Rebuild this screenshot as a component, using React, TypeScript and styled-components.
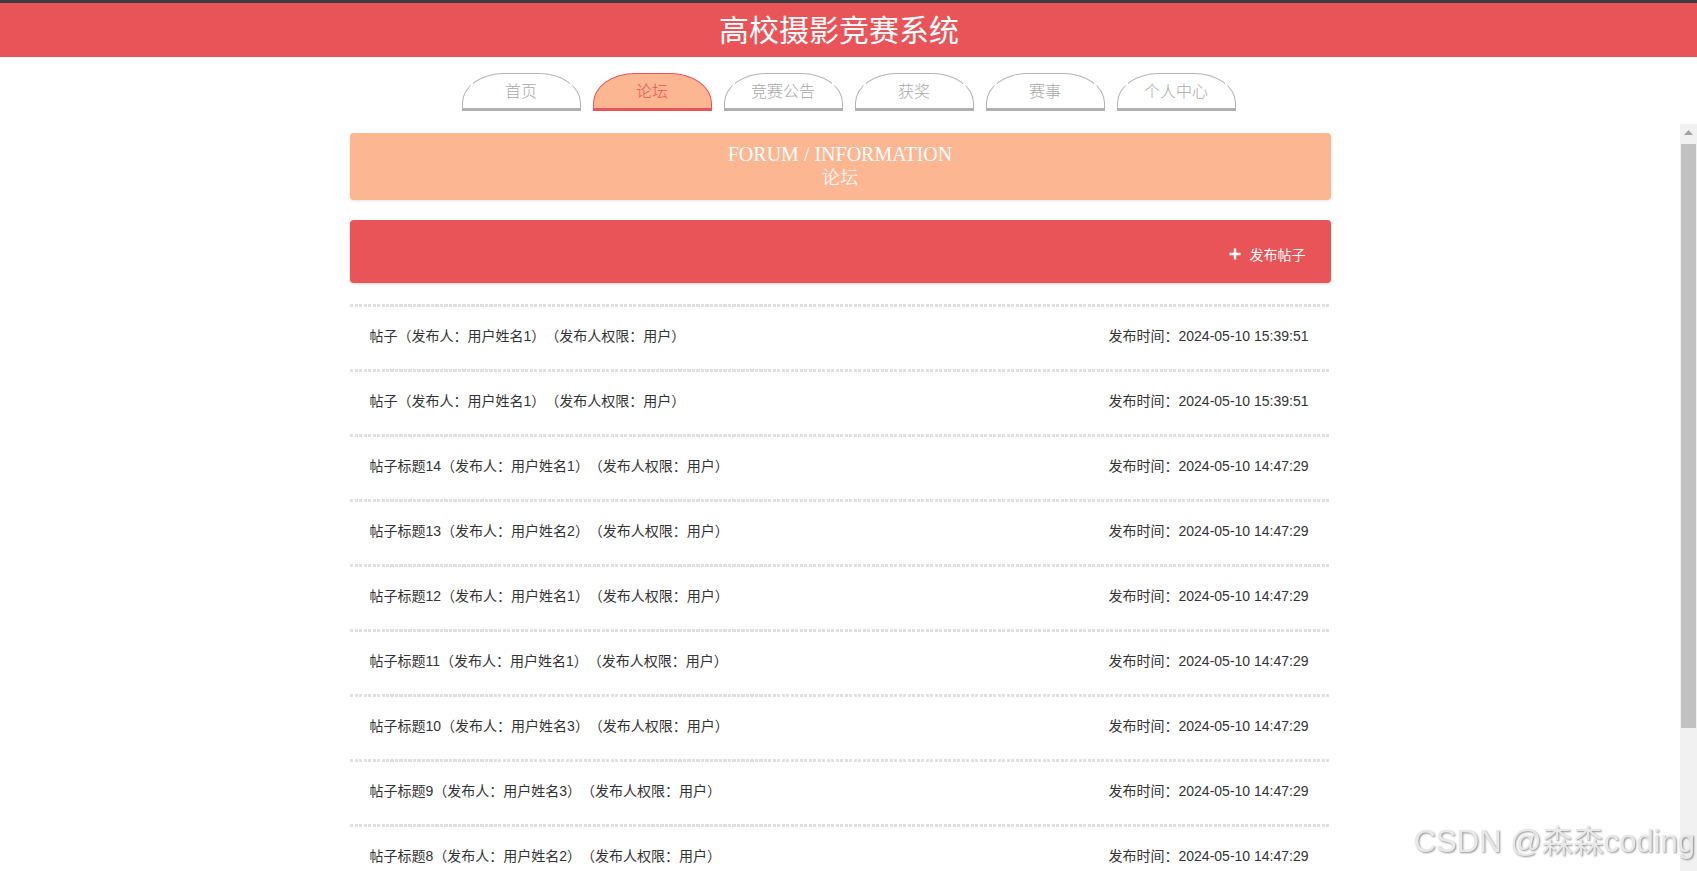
import React from "react";
import styled, {createGlobalStyle} from "styled-components";

const GlobalStyle = createGlobalStyle`
  html, body {
    margin: 0;
    padding: 0;
    height: 100%;
    overflow: hidden;
    font-family: "Liberation Sans", "Noto Sans CJK SC", sans-serif;
    background: #fff;
    text-spacing-trim: space-all;
  }
`;

interface IPost {
  title: string;
  author: string;
  time: string;
}

const tabs = ["首页", "论坛", "竞赛公告", "获奖", "赛事", "个人中心"];

const posts: IPost[] = [
  {title: "帖子", author: "用户姓名1", time: "2024-05-10 15:39:51"},
  {title: "帖子", author: "用户姓名1", time: "2024-05-10 15:39:51"},
  {title: "帖子标题14", author: "用户姓名1", time: "2024-05-10 14:47:29"},
  {title: "帖子标题13", author: "用户姓名2", time: "2024-05-10 14:47:29"},
  {title: "帖子标题12", author: "用户姓名1", time: "2024-05-10 14:47:29"},
  {title: "帖子标题11", author: "用户姓名1", time: "2024-05-10 14:47:29"},
  {title: "帖子标题10", author: "用户姓名3", time: "2024-05-10 14:47:29"},
  {title: "帖子标题9", author: "用户姓名3", time: "2024-05-10 14:47:29"},
  {title: "帖子标题8", author: "用户姓名2", time: "2024-05-10 14:47:29"},
  {title: "帖子标题7", author: "用户姓名1", time: "2024-05-10 14:47:29"},
  {title: "帖子标题6", author: "用户姓名3", time: "2024-05-10 14:47:29"},
];

function App() {
  return (
    <Page>
      <GlobalStyle />
      <TopStrip />
      <Header>
        <Title>高校摄影竞赛系统</Title>
      </Header>
      <Nav>
        {tabs.map((tab) => (
          <Tab key={tab} active={tab === "论坛"}>
            {tab}
          </Tab>
        ))}
      </Nav>
      <Body>
        <Scroller>
          <Content>
            <Banner>
              <BannerEn>FORUM / INFORMATION</BannerEn>
              <BannerCn>论坛</BannerCn>
            </Banner>
            <ActionBar>
              <PostButton>
                <PlusIcon viewBox="0 0 12 12">
                  <path d="M6 0.5v11M0.5 6h11" stroke="#fff" strokeWidth="2.4" />
                </PlusIcon>
                发布帖子
              </PostButton>
            </ActionBar>
            <List>
              {posts.map((post, i) => (
                <Row key={i}>
                  <span>
                    {post.title}（发布人：{post.author}）（发布人权限：用户）
                  </span>
                  <span>发布时间：{post.time}</span>
                </Row>
              ))}
            </List>
          </Content>
        </Scroller>
        <ScrollTrack>
          <ArrowButton>
            <svg width="9" height="5" viewBox="0 0 9 5">
              <polygon points="4.5,0 9,5 0,5" fill="#a3a3a3" />
            </svg>
          </ArrowButton>
          <Thumb />
        </ScrollTrack>
      </Body>
      <Watermark>CSDN @森森coding</Watermark>
    </Page>
  );
}

const Page = styled.div`
  height: 100vh;
  display: flex;
  flex-direction: column;
`;
const TopStrip = styled.div`
  height: 3px;
  background-color: #3c3c3c;
`;
const Header = styled.div`
  height: 54px;
  box-sizing: border-box;
  background-color: #e95458;
  display: flex;
  align-items: center;
  justify-content: center;
  padding: 0 19px 4px 0;
`;
const Title = styled.div`
  color: #fff;
  font-size: 30px;
  font-family: "Noto Sans CJK SC", sans-serif;
`;
const Nav = styled.div`
  display: flex;
  justify-content: center;
  gap: 12px;
  padding: 16px 0 13px;
`;
const Tab = styled.div<{active?: boolean}>`
  width: 117px;
  height: 31px;
  padding-bottom: 3px;
  display: flex;
  align-items: center;
  justify-content: center;
  font-size: 16px;
  font-family: "Noto Sans CJK SC", sans-serif;
  font-weight: 300;
  color: ${(p) => (p.active ? "#e95458" : "#a9a9a9")};
  background-color: ${(p) => (p.active ? "#fdb692" : "#fff")};
  border: 1px solid ${(p) => (p.active ? "#e95458" : "#b4b4b4")};
  border-bottom: 3px solid ${(p) => (p.active ? "#e95458" : "#b0b0b0")};
  border-radius: 42px 42px 0 0 / 30px 30px 0 0;
`;
const Body = styled.div`
  flex: 1;
  min-height: 0;
  display: flex;
`;
const Scroller = styled.div`
  flex: 1;
  overflow: hidden;
`;
const ScrollTrack = styled.div`
  width: 17px;
  background-color: #f1f1f1;
  display: flex;
  flex-direction: column;
  align-items: center;
`;
const ArrowButton = styled.div`
  height: 17px;
  width: 17px;
  display: flex;
  align-items: center;
  justify-content: center;
`;
const Thumb = styled.div`
  width: 15px;
  height: 584px;
  margin-top: 3px;
  background-color: #c1c1c1;
`;
const Content = styled.div`
  width: 981px;
  margin: 9px auto 0;
  padding-bottom: 30px;
`;
const Banner = styled.div`
  height: 64px;
  padding-bottom: 3px;
  background-color: #fdb692;
  border-radius: 4px;
  box-shadow: 0 1px 3px rgba(0, 0, 0, 0.12);
  display: flex;
  flex-direction: column;
  align-items: center;
  justify-content: center;
  color: #fff;
`;
const BannerEn = styled.div`
  font-family: "Liberation Serif", serif;
  font-size: 20px;
  line-height: 22px;
`;
const BannerCn = styled.div`
  font-family: "Noto Serif CJK SC", "Noto Sans CJK SC", serif;
  font-size: 18px;
  line-height: 23px;
`;
const ActionBar = styled.div`
  margin-top: 20px;
  height: 63px;
  background-color: #e95458;
  border-radius: 4px;
  box-shadow: 0 1px 3px rgba(0, 0, 0, 0.18);
  display: flex;
  align-items: center;
  justify-content: flex-end;
  padding-right: 25px;
`;
const PostButton = styled.div`
  display: flex;
  align-items: center;
  gap: 9px;
  color: #fff;
  font-size: 14px;
  margin-top: 4px;
  font-family: "Noto Sans CJK SC", sans-serif;
`;
const PlusIcon = styled.svg`
  width: 12px;
  height: 12px;
`;
const List = styled.div`
  margin-top: 21px;
  background: repeating-linear-gradient(90deg, #e0e0e0 0 3px, transparent 3px 4.5px) bottom left / 100% 3px no-repeat;
  padding-bottom: 3px;
`;
const Row = styled.div`
  height: 62px;
  padding: 3px 22px 0 20px;
  display: flex;
  align-items: center;
  justify-content: space-between;
  font-size: 14px;
  color: #333;
  background: repeating-linear-gradient(90deg, #e0e0e0 0 3px, transparent 3px 4.5px) top left / 100% 3px no-repeat;
  span {
    margin-bottom: 6px;
  }
`;
const Watermark = styled.div`
  position: fixed;
  right: 2px;
  bottom: 10px;
  font-size: 31px;
  font-family: "Liberation Sans", "Noto Sans CJK SC", sans-serif;
  color: #e8e8e8;
  text-shadow: 1px 1px 2px rgba(0, 0, 0, 0.45);
  pointer-events: none;
  z-index: 2;
`;

export default App;
